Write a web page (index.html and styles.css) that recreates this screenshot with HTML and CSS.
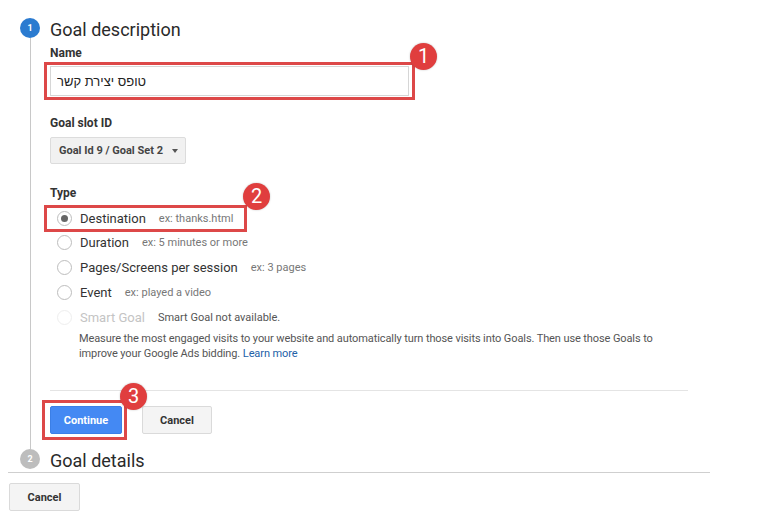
FILE: index.html
```html
<!DOCTYPE html>
<html>
<head>
    <meta charset="utf-8">
    <title>Goal setup</title>
    <link rel="stylesheet" href="styles.css">
</head>
<body>
    <div class="panel">

        <div class="step-head">
            <span class="step-num active">1</span>
            <span class="step-title">Goal description</span>
        </div>
        <div class="step-body">
            <div class="label">Name</div>
            <div class="marked name-box">
                <input class="name-input" type="text" value="טופס יצירת קשר">
                <span class="badge">1</span>
            </div>

            <div class="label slot-label">Goal slot ID</div>
            <button class="dropdown">Goal Id 9 / Goal Set 2 <span class="caret"></span></button>

            <div class="label type-label">Type</div>
            <div class="types">
                <div class="marked type-box">
                    <div class="type-row">
                        <span class="radio checked"></span>
                        <span class="type-name">Destination</span>
                        <span class="type-ex">ex: thanks.html</span>
                    </div>
                    <span class="badge">2</span>
                </div>
                <div class="type-row">
                    <span class="radio"></span>
                    <span class="type-name">Duration</span>
                    <span class="type-ex">ex: 5 minutes or more</span>
                </div>
                <div class="type-row">
                    <span class="radio"></span>
                    <span class="type-name">Pages/Screens per session</span>
                    <span class="type-ex">ex: 3 pages</span>
                </div>
                <div class="type-row">
                    <span class="radio"></span>
                    <span class="type-name">Event</span>
                    <span class="type-ex">ex: played a video</span>
                </div>
                <div class="type-row">
                    <span class="radio disabled"></span>
                    <span class="type-name off">Smart Goal</span>
                    <span class="type-note">Smart Goal not available.</span>
                </div>
                <p class="smart-text">Measure the most engaged visits to your website and automatically turn those visits into Goals. Then use those Goals to improve your Google Ads bidding. <a href="#">Learn more</a></p>
            </div>

            <div class="divider"></div>

            <div class="actions">
                <div class="marked go-box">
                    <button class="btn primary">Continue</button>
                    <span class="badge">3</span>
                </div>
                <button class="btn">Cancel</button>
            </div>
        </div>

        <div class="step-head last">
            <span class="step-num">2</span>
            <span class="step-title">Goal details</span>
        </div>
    </div>

    <button class="btn bottom-cancel">Cancel</button>
</body>
</html>
```
FILE: styles.css
```css
* {
    margin: 0;
    padding: 0;
    box-sizing: border-box;
}

body {
    font-family: Roboto, "Liberation Sans", sans-serif;
    color: #333;
    background: white;
}

.panel {
    width: 702px;
    margin-left: 8px;
    border-bottom: 1px solid #cfcfcf;
}

.step-head {
    display: flex;
    align-items: center;
    gap: 10px;
    padding-left: 12px;
    padding-top: 18px;
    height: 38px;
}

.step-head.last {
    padding-top: 0;
    height: 23px;
    align-items: flex-start;
}

.step-num {
    width: 20px;
    height: 20px;
    border-radius: 50%;
    background: #bdbdbd;
    color: white;
    font-size: 9px;
    font-weight: bold;
    display: flex;
    align-items: center;
    justify-content: center;
}

.step-num.active {
    background: #2b7bd0;
}

.step-title {
    font-size: 18px;
    line-height: 20px;
    padding-top: 4px;
    color: #2a2a2a;
}

.step-head.last .step-title {
    padding-top: 2px;
}

.step-body {
    margin-left: 22px;
    border-left: 1px solid #c8c8c8;
    padding: 8px 22px 9px 19px;
}

.label {
    font-size: 12px;
    font-weight: bold;
    line-height: 14px;
    color: #333;
}

.slot-label {
    margin-top: 16px;
}

.type-label {
    margin-top: 22px;
}

.marked {
    position: relative;
    border: 3px solid #dd4848;
}

.badge {
    position: absolute;
    width: 27px;
    height: 27px;
    border-radius: 50%;
    background: #e03e3e;
    color: white;
    font-size: 20px;
    line-height: 27px;
    text-align: center;
    box-shadow: 0 0 2px rgba(0, 0, 0, 0.25);
}

.name-box {
    width: 371px;
    margin-top: 2px;
    margin-left: -6px;
    padding: 1px 3px;
}

.name-box .badge {
    right: -25px;
    top: -22px;
}

.name-input {
    display: block;
    width: 359px;
    height: 30px;
    border: 1px solid #d6d6d6;
    padding-left: 6px;
    font-family: "Liberation Sans", sans-serif;
    font-size: 13px;
    color: #222;
}

.dropdown {
    display: block;
    margin-top: 7px;
    width: 136px;
    height: 27px;
    border: 1px solid #dcdcdc;
    border-radius: 2px;
    background: #f1f1f1;
    font-family: Roboto, sans-serif;
    font-size: 11px;
    font-weight: bold;
    color: #444;
    text-align: left;
    padding-left: 8px;
}

.caret {
    display: inline-block;
    margin-left: 6px;
    vertical-align: middle;
    border-left: 3px solid transparent;
    border-right: 3px solid transparent;
    border-top: 4px solid #555;
}

.types {
    margin-top: 5px;
}

.type-box {
    width: 203px;
    margin-left: -6px;
    margin-bottom: -2px;
    padding-left: 3px;
}

.type-box .type-row {
    height: 21px;
}

.type-box .badge {
    right: -26px;
    top: -25px;
}

.type-row {
    display: flex;
    align-items: center;
    height: 25px;
}

.radio {
    width: 15px;
    height: 15px;
    margin-left: 7px;
    margin-right: 8px;
    border: 1px solid #bdbdbd;
    border-radius: 50%;
    background: white;
    display: flex;
    align-items: center;
    justify-content: center;
}

.radio.checked::after {
    content: "";
    width: 7px;
    height: 7px;
    border-radius: 50%;
    background: #666;
}

.radio.disabled {
    border-color: #eee;
}

.type-name {
    font-size: 13px;
    color: #333;
    margin-right: 13px;
}

.type-name.off {
    color: #c4c4c4;
}

.type-ex {
    font-size: 11px;
    color: #777;
}

.type-note {
    font-size: 11px;
    color: #555;
}

.smart-text {
    margin-top: 1px;
    margin-left: 29px;
    font-size: 11px;
    line-height: 15px;
    color: #555;
    letter-spacing: -0.1px;
}

.smart-text a {
    color: #2261a8;
    text-decoration: none;
}

.divider {
    margin-top: 29px;
    border-top: 1px solid #e4e4e4;
}

.actions {
    display: flex;
    align-items: center;
    gap: 15px;
    margin-top: 9px;
}

.go-box {
    margin-left: -8px;
    padding: 3px 2px 3px 5px;
}

.go-box .badge {
    right: -23px;
    top: -20px;
}

.btn {
    display: block;
    height: 28px;
    width: 70px;
    border: 1px solid #dadada;
    border-radius: 2px;
    background: #f4f4f4;
    font-family: Roboto, sans-serif;
    font-size: 11px;
    font-weight: bold;
    color: #333;
}

.btn.primary {
    width: 72px;
    background: #4489f3;
    border-color: #3b7fe6;
    color: white;
}

.bottom-cancel {
    margin-top: 10px;
    margin-left: 9px;
    width: 71px;
}
```
